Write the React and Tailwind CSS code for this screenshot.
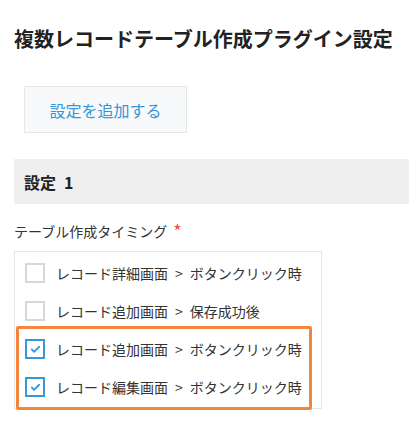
import { Check } from 'lucide-react'

const timings = [
  { screen: 'レコード詳細画面', event: 'ボタンクリック時', checked: false },
  { screen: 'レコード追加画面', event: '保存成功後', checked: false },
  { screen: 'レコード追加画面', event: 'ボタンクリック時', checked: true },
  { screen: 'レコード編集画面', event: 'ボタンクリック時', checked: true },
]

function CheckRow({ screen, event, checked }) {
  return (
    <label className="flex h-[38px] items-center pl-[10px]">
      <span
        className={
          checked
            ? 'flex h-5 w-5 items-center justify-center border-2 border-[#3498db] bg-white'
            : 'flex h-5 w-5 items-center justify-center border-2 border-[#d8d8d8] bg-white'
        }
      >
        {checked && <Check className="h-[11px] w-[11px] text-[#3498db]" strokeWidth={4} />}
      </span>
      <span className="ml-[11px] text-[14px] text-[#333]">
        {screen}
        <span className="mx-[7px]">&gt;</span>
        {event}
      </span>
    </label>
  )
}

export default function App() {
  return (
    <div
      className="min-h-[432px] w-[409px] overflow-hidden bg-white pl-[14px] text-[#333]"
      style={{ fontFamily: '"Noto Sans CJK JP", "Noto Sans", sans-serif' }}
    >
      <h1 className="pt-[24px] text-[20px] font-bold leading-[30px] text-[#222]">
        複数レコードテーブル作成プラグイン設定
      </h1>

      <button className="ml-[10px] mt-[32px] flex h-[47px] w-[163px] items-center justify-center border border-[#e3e7e8] bg-[#f7f9fa] text-[16px] text-[#3498db]">
        設定を追加する
      </button>

      <div className="mt-[26px] flex h-[45px] items-center bg-[#efefef] pl-[10px]">
        <h2 className="text-[16px] font-bold text-[#222]">
          設定<span className="ml-[8px]">1</span>
        </h2>
      </div>

      <div className="mt-[17px] flex items-start text-[14px] leading-[21px] text-[#333]">
        テーブル作成タイミング
        <span className="ml-[6px] text-[18px] leading-[18px] text-[#e74c3c]">*</span>
      </div>

      <div className="relative mt-[9px] w-[308px] border border-[#e3e7e8] py-[2px]">
        {timings.map((t, i) => (
          <CheckRow key={i} {...t} />
        ))}
        <div className="pointer-events-none absolute left-[1px] top-[74px] h-[84px] w-[296px] rounded-[2px] border-[3px] border-[#f5843c]" />
      </div>
    </div>
  )
}
